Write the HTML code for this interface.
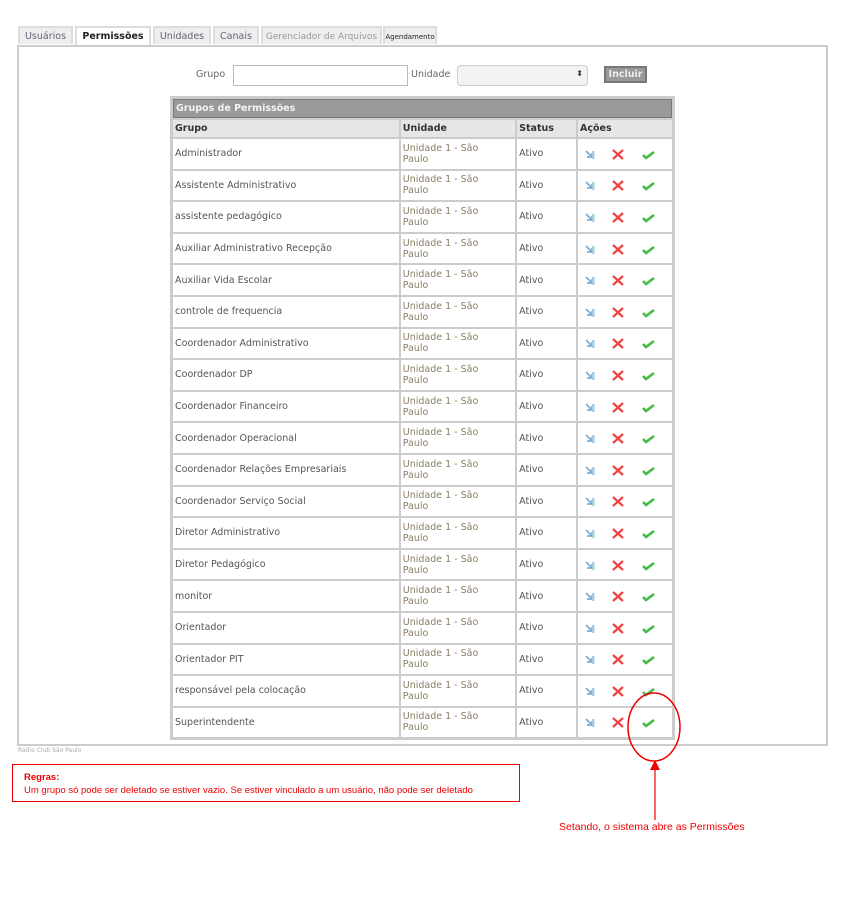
<!DOCTYPE html>
<html><head><meta charset="utf-8"><style>
body{margin:0;background:#fff;width:847px;height:898px;position:relative;overflow:hidden;font-family:"DejaVu Sans","Liberation Sans",sans-serif;font-size:9.5px;color:#555}
.tab{position:absolute;top:26px;height:18px;border:2px solid #ddd;border-bottom:none;background:#eee;font-size:9.5px;line-height:18px;text-align:center;color:#667;box-sizing:border-box}
.tab.act{background:#fff;color:#222;font-weight:bold;height:21px}
#main{position:absolute;left:17px;top:45px;width:811px;height:701px;border:2px solid #ccc;box-sizing:border-box}
.abs{position:absolute}
table{position:absolute;left:171px;top:97px;width:503px;border-collapse:separate;border-spacing:2px;background:#ccc;outline:1px solid #ccc}
td{background:#fff;height:29.6px;padding:0 2px;vertical-align:middle;line-height:11px}
th{background:#e6e6e6;text-align:left;font-size:9.5px;color:#333;height:17px;padding:0 2px}
.title{background:#999;color:#f4f4f4;font-weight:bold;height:17px;border:1px solid #777}
.u{color:#8a7e66}
</style></head><body>
<div class="tab" style="left:18px;width:55px">Usuários</div>
<div class="tab act" style="left:75px;width:76px">Permissões</div>
<div class="tab" style="left:153px;width:58px">Unidades</div>
<div class="tab" style="left:213px;width:46px">Canais</div>
<div class="tab" style="left:261px;width:121px;color:#999;font-size:9px">Gerenciador de Arquivos</div>
<div class="tab" style="left:383px;width:54px;font-size:7px;color:#222">Agendamento</div>
<div id="main"></div>
<div class="abs" style="left:196px;top:69px;color:#666">Grupo</div>
<div class="abs" style="left:233px;top:65px;width:175px;height:21px;border:1px solid #bbb;box-sizing:border-box"></div>
<div class="abs" style="left:411px;top:69px;color:#666">Unidade</div>
<div class="abs" style="left:457px;top:65px;width:131px;height:21px;border:1px solid #ccc;border-radius:4px;background:#f3f3f3;box-sizing:border-box"><span style="position:absolute;right:4px;top:3px;font-size:8px;color:#333">⬍</span></div>
<div class="abs" style="left:604px;top:66px;width:43px;height:17px;background:#999;border:2px solid #777;box-sizing:border-box;color:#eee;font-weight:bold;text-align:center;line-height:13px">Incluir</div>
<table>
<tr><td colspan="4" class="title">Grupos de Permissões</td></tr>
<tr><th style="width:223px">Grupo</th><th style="width:111px">Unidade</th><th style="width:55px">Status</th><th>Ações</th></tr>
</table>
<div class="abs" style="left:18px;top:747px;font-size:6px;color:#aaa">Rádio Club São Paulo</div>
<div class="abs" style="left:12px;top:764px;width:508px;height:38px;border:1px solid #e00;box-sizing:border-box;font-family:'Liberation Sans',sans-serif;font-size:9.5px;color:#e00;padding:6px 0 0 11px;line-height:13px"><b>Regras:</b><br>Um grupo só pode ser deletado se estiver vazio. Se estiver vinculado a um usuário, não pode ser deletado</div>
<svg class="abs" style="left:0;top:0" width="847" height="898">
<ellipse cx="654" cy="727" rx="26" ry="34" fill="none" stroke="#e00" stroke-width="1.5"/>
<line x1="655" y1="820" x2="655" y2="768" stroke="#e00" stroke-width="1.2"/>
<polygon points="650,770 660,770 655,760" fill="#e00"/>
</svg>
<div class="abs" style="left:559px;top:821px;font-family:'Liberation Sans',sans-serif;font-size:10.5px;color:#e00">Setando, o sistema abre as Permissões</div>
<script>
var g=["Administrador","Assistente Administrativo","assistente pedagógico","Auxiliar Administrativo Recepção","Auxiliar Vida Escolar","controle de frequencia","Coordenador Administrativo","Coordenador DP","Coordenador Financeiro","Coordenador Operacional","Coordenador Relações Empresariais","Coordenador Serviço Social","Diretor Administrativo","Diretor Pedagógico","monitor","Orientador","Orientador PIT","responsável pela colocação","Superintendente"];
var ic='<svg width="90" height="14" style="vertical-align:middle"><path d="M6 4l6 6M7 10h5V6" stroke="#7aaed6" stroke-width="1.8" fill="none"/><rect x="12" y="4" width="2.5" height="8" fill="#a8cbe4"/><path d="M33 3l10 9M43 3L33 12" stroke="#ee4444" stroke-width="2.2"/><path d="M63 8l3 3 8-6" stroke="#44bb44" stroke-width="2.6" fill="none"/></svg>';
var t=document.querySelector("table"),h="";
g.forEach(function(x){h+='<tr><td>'+x+'</td><td class="u">Unidade 1 - São<br>Paulo</td><td>Ativo</td><td>'+ic+'</td></tr>'});
t.insertAdjacentHTML("beforeend",h);
</script>
</body></html>
